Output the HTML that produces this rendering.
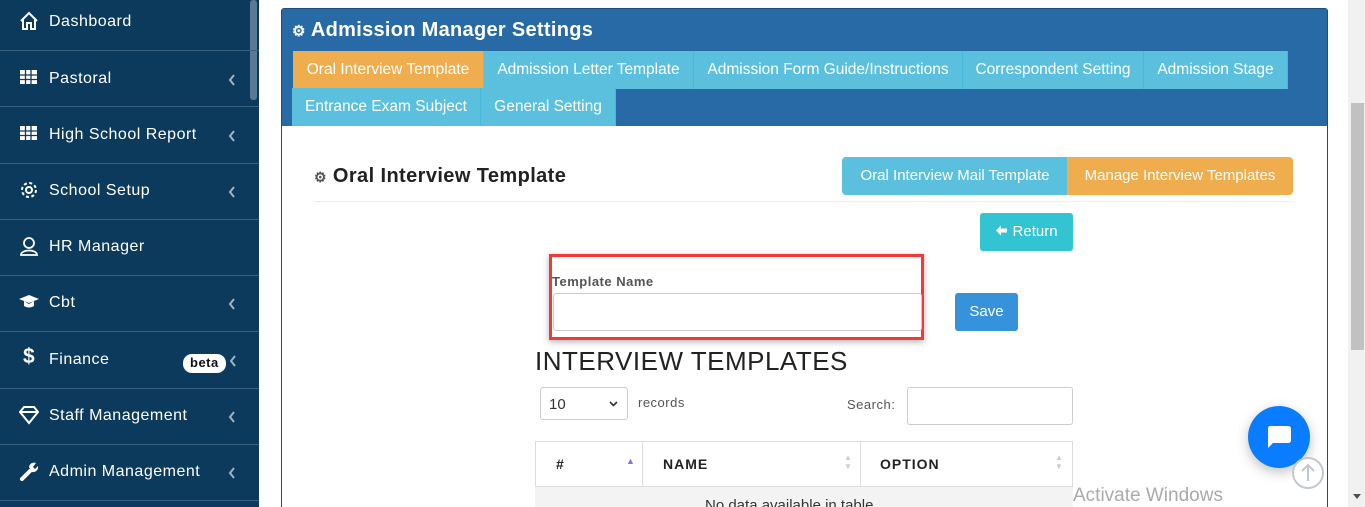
<!DOCTYPE html>
<html><head><meta charset="utf-8"><style>
*{box-sizing:border-box;margin:0;padding:0}
html,body{width:1365px;height:507px;overflow:hidden}
body{background:#fff;font-family:"Liberation Sans",sans-serif;position:relative}
.sb{position:absolute;left:0;top:0;width:259px;height:507px;background:#0c3a5c}
.it{position:absolute;left:0;width:259px;border-bottom:1px solid #3c617d;color:#fff;font-size:16px;letter-spacing:.5px}
.it .ic{position:absolute;left:19px;width:20px;height:20px}
.it .tx{position:absolute;left:49px}
.it .ch{position:absolute;left:228px;width:8px;height:12px}
.abs{position:absolute}
.tab{position:absolute;height:38px;line-height:38px;color:#fff;font-size:15.5px;text-align:center;background:#5bc0de;border-right:1px solid #46b8da}
</style></head><body>
<div class="sb">
<div class="abs" style="left:250px;top:0;width:7px;height:100px;background:#5a7a92;border-radius:3px"></div>
<div class="it" style="top:0;height:51px"><svg class="ic" style="top:11px" viewBox="0 0 20 20" fill="none" stroke="#fff" stroke-width="2"><path d="M2 10 L10 2 L18 10 M4 8 V18 H8 V12 H12 V18 H16 V8"/></svg><span class="tx" style="top:13px">Dashboard</span></div>
<div class="it" style="top:51px;height:56px"><svg class="ic" style="top:17px" viewBox="0 0 20 20"><rect x="1" y="2" width="17" height="14" fill="#fff"/><path d="M1 7H18M1 11.5H18M6.5 2V16M12 2V16" stroke="#0c3a5c" stroke-width="1.3"/></svg><span class="tx" style="top:19px">Pastoral</span><svg class="ch" style="top:23px" viewBox="0 0 8 12"><path d="M6 1 L2 6 L6 11" fill="none" stroke="#9fb3c3" stroke-width="2"/></svg></div>
<div class="it" style="top:107px;height:57px"><svg class="ic" style="top:17px" viewBox="0 0 20 20"><rect x="1" y="2" width="17" height="14" fill="#fff"/><path d="M1 7H18M1 11.5H18M6.5 2V16M12 2V16" stroke="#0c3a5c" stroke-width="1.3"/></svg><span class="tx" style="top:19px">High School Report</span><svg class="ch" style="top:23px" viewBox="0 0 8 12"><path d="M6 1 L2 6 L6 11" fill="none" stroke="#9fb3c3" stroke-width="2"/></svg></div>
<div class="it" style="top:164px;height:56px"><svg class="ic" style="top:16px" viewBox="0 0 20 20" fill="none" stroke="#fff" stroke-width="2"><circle cx="10" cy="10" r="3"/><circle cx="10" cy="10" r="7" stroke-dasharray="3 2.5"/></svg><span class="tx" style="top:18px">School Setup</span><svg class="ch" style="top:22px" viewBox="0 0 8 12"><path d="M6 1 L2 6 L6 11" fill="none" stroke="#9fb3c3" stroke-width="2"/></svg></div>
<div class="it" style="top:220px;height:56px"><svg class="ic" style="top:16px" viewBox="0 0 20 20" fill="none" stroke="#fff" stroke-width="1.8"><circle cx="10" cy="7" r="5"/><path d="M2 19 C2 13 18 13 18 19 Z"/></svg><span class="tx" style="top:18px">HR Manager</span></div>
<div class="it" style="top:276px;height:56px"><svg class="ic" style="top:16px" viewBox="0 0 20 20" fill="#fff"><path d="M0 7 L10 3 L20 7 L10 11 Z M5 9 V14 C8 16 12 16 15 14 V9 L10 12 Z"/></svg><span class="tx" style="top:18px">Cbt</span><svg class="ch" style="top:22px" viewBox="0 0 8 12"><path d="M6 1 L2 6 L6 11" fill="none" stroke="#9fb3c3" stroke-width="2"/></svg></div>
<div class="it" style="top:332px;height:57px"><span class="abs" style="left:23px;top:13px;font-size:21px;font-weight:bold">$</span><span class="tx" style="top:19px">Finance</span><span class="abs" style="left:183px;top:22px;background:#fff;color:#111;font-size:13px;font-weight:bold;border-radius:9px;padding:1px 7px;height:19px">beta</span><svg class="ch" style="top:23px;left:229px" viewBox="0 0 8 12"><path d="M6 1 L2 6 L6 11" fill="none" stroke="#9fb3c3" stroke-width="2"/></svg></div>
<div class="it" style="top:389px;height:56px"><svg class="ic" style="top:16px" viewBox="0 0 20 20" fill="none" stroke="#fff" stroke-width="2"><path d="M5 2 H15 L19 7 L10 18 L1 7 Z M1 7 H19"/></svg><span class="tx" style="top:18px">Staff Management</span><svg class="ch" style="top:22px" viewBox="0 0 8 12"><path d="M6 1 L2 6 L6 11" fill="none" stroke="#9fb3c3" stroke-width="2"/></svg></div>
<div class="it" style="top:445px;height:56px"><svg class="ic" style="top:16px" viewBox="0 0 20 20"><path d="M3 18 L11 10" stroke="#fff" stroke-width="4" stroke-linecap="round"/><path d="M10 6 A5 5 0 0 1 17 2 L14 6 L16 8 L19 5 A5 5 0 0 1 13 11 Z" fill="#fff"/></svg><span class="tx" style="top:18px">Admin Management</span><svg class="ch" style="top:22px" viewBox="0 0 8 12"><path d="M6 1 L2 6 L6 11" fill="none" stroke="#9fb3c3" stroke-width="2"/></svg></div>
</div>
<div class="abs" style="left:1348px;top:0;width:17px;height:507px;background:#f1f1f1"></div>
<div class="abs" style="left:1351px;top:103px;width:13px;height:247px;background:#c1c1c1"></div>
<div class="abs" style="left:1353px;top:494px;width:0;height:0;border:4px solid transparent;border-top:5px solid #505050"></div>
<div class="abs" style="left:281px;top:8px;width:1047px;height:499px;border:1px solid #1d4e7c;border-bottom:none;border-radius:3px 3px 0 0;background:#fff"></div>
<div class="abs" style="left:282px;top:9px;width:1045px;height:117px;background:#286aa6"></div>
<div class="abs" style="left:292px;top:19px;color:#fff;font-size:20px;font-weight:bold;letter-spacing:.3px"><span style="font-size:15px">&#9881;</span> Admission Manager Settings</div>
<div class="tab" style="left:293px;top:51px;width:191px;background:#f0ad4e;border-color:#eea236">Oral Interview Template</div>
<div class="tab" style="left:484px;top:51px;width:210px">Admission Letter Template</div>
<div class="tab" style="left:694px;top:51px;width:269px">Admission Form Guide/Instructions</div>
<div class="tab" style="left:963px;top:51px;width:181px">Correspondent Setting</div>
<div class="tab" style="left:1144px;top:51px;width:144px">Admission Stage</div>
<div class="tab" style="left:292px;top:88px;width:189px">Entrance Exam Subject</div>
<div class="tab" style="left:481px;top:88px;width:135px">General Setting</div>
<div class="abs" style="left:314px;top:165px;font-size:20px;font-weight:bold;color:#222;letter-spacing:.4px"><span style="font-size:14px;color:#555">&#9881;</span> Oral Interview Template</div>
<div class="abs" style="left:314px;top:201px;width:979px;height:1px;background:#eee"></div>
<div class="abs" style="left:842px;top:157px;width:226px;height:38px;line-height:38px;background:#5bc0de;color:#fff;font-size:15px;text-align:center;border-radius:4px 0 0 4px">Oral Interview Mail Template</div>
<div class="abs" style="left:1067px;top:157px;width:226px;height:38px;line-height:38px;background:#f0ad4e;color:#fff;font-size:15px;text-align:center;border-radius:0 4px 4px 0">Manage Interview Templates</div>
<div class="abs" style="left:980px;top:213px;width:93px;height:38px;line-height:38px;background:#33c4d1;color:#fff;font-size:15px;text-align:center;border-radius:3px"><svg width="13" height="13" viewBox="0 0 13 13" style="vertical-align:-1px"><path d="M1 6.5 L6 1.5 V4.5 H12 V8.5 H6 V11.5 Z" fill="#fff"/></svg> Return</div>
<div class="abs" style="left:549px;top:254px;width:375px;height:86px;border:3px solid #ef3a3a;box-shadow:0 2px 6px rgba(0,0,0,.3)"></div>
<div class="abs" style="left:552px;top:274px;font-size:13px;font-weight:bold;color:#555;letter-spacing:.5px">Template Name</div>
<div class="abs" style="left:553px;top:293px;width:369px;height:38px;border:1px solid #ccc;border-radius:3px"></div>
<div class="abs" style="left:955px;top:293px;width:63px;height:38px;line-height:38px;background:#3592db;color:#fff;font-size:15px;text-align:center;border-radius:3px">Save</div>
<div class="abs" style="left:535px;top:346px;font-size:26px;color:#222;letter-spacing:.5px">INTERVIEW TEMPLATES</div>
<div class="abs" style="left:540px;top:387px;width:88px;height:33px;border:1px solid #ccc;border-radius:3px;font-size:15px;color:#333;padding:8px 0 0 8px">10<svg style="position:absolute;right:9px;top:13px" width="9" height="6" viewBox="0 0 9 6"><path d="M1 1 L4.5 4.5 L8 1" fill="none" stroke="#333" stroke-width="1.6"/></svg></div>
<div class="abs" style="left:638px;top:395px;font-size:13px;color:#555;letter-spacing:.5px">records</div>
<div class="abs" style="left:847px;top:397px;font-size:13px;color:#555;letter-spacing:.5px">Search:</div>
<div class="abs" style="left:907px;top:387px;width:166px;height:38px;border:1px solid #ccc;border-radius:3px"></div>
<div class="abs" style="left:535px;top:441px;width:538px;height:66px;border:1px solid #ddd;border-bottom:none"></div>
<div class="abs" style="left:535px;top:486px;width:538px;height:21px;background:#f3f3f3;border-top:1px solid #ddd;overflow:hidden"><span class="abs" style="left:170px;top:10px;font-size:15px;color:#333;white-space:nowrap">No data available in table</span></div>
<div class="abs" style="left:642px;top:441px;width:1px;height:45px;background:#ddd"></div>
<div class="abs" style="left:860px;top:441px;width:1px;height:45px;background:#ddd"></div>
<div class="abs" style="left:556px;top:456px;font-size:14px;font-weight:bold;color:#222">#</div>
<div class="abs" style="left:626px;top:456px;font-size:9px;color:#7a7ad8">&#9650;</div>
<div class="abs" style="left:663px;top:456px;font-size:14px;font-weight:bold;color:#222;letter-spacing:1px">NAME</div>
<div class="abs" style="left:880px;top:456px;font-size:14px;font-weight:bold;color:#222;letter-spacing:1px">OPTION</div>
<div class="abs" style="left:844px;top:453px;font-size:8px;color:#ccc;line-height:9px">&#9650;<br>&#9660;</div>
<div class="abs" style="left:1055px;top:453px;font-size:8px;color:#ccc;line-height:9px">&#9650;<br>&#9660;</div>
<div class="abs" style="left:1073px;top:485px;font-size:19px;color:#aaa;white-space:nowrap">Activate Windows</div>
<div class="abs" style="left:1248px;top:406px;width:62px;height:62px;border-radius:50%;background:#0a7cff;box-shadow:0 4px 12px rgba(0,0,0,.25)"></div>
<svg class="abs" style="left:1265px;top:424px" width="28" height="26" viewBox="0 0 28 26"><path d="M5 2 H23 Q26 2 26 5 V16 Q26 19 23 19 H8 L3 24 V5 Q3 2 5 2 Z" fill="#fff"/></svg>
<svg class="abs" style="left:1291px;top:456px" width="34" height="34" viewBox="0 0 34 34" fill="none" stroke="#c3c8cf" stroke-width="2"><circle cx="17" cy="17" r="15" fill="#fff"/><path d="M17 25V9M11 15L17 9L23 15"/></svg>
</body></html>
